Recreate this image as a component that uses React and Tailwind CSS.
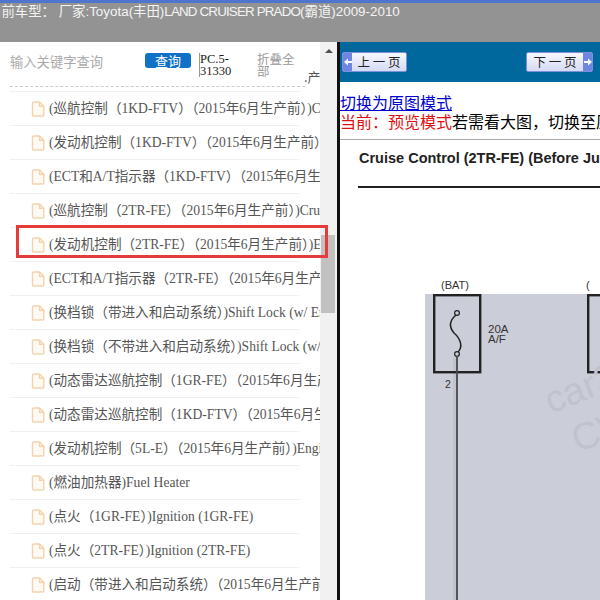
const rows = [
  "(巡航控制（1KD-FTV）（2015年6月生产前）)Cruise Control (1KD-FTV)",
  "(发动机控制（1KD-FTV）（2015年6月生产前）)Engine Control",
  "(ECT和A/T指示器（1KD-FTV）（2015年6月生产前）)ECT",
  "(巡航控制（2TR-FE）（2015年6月生产前）)Cruise Control",
  "(发动机控制（2TR-FE）（2015年6月生产前）)Engine Control",
  "(ECT和A/T指示器（2TR-FE）（2015年6月生产前）)ECT",
  "(换档锁（带进入和启动系统）)Shift Lock (w/ Entry)",
  "(换档锁（不带进入和启动系统）)Shift Lock (w/o Entry)",
  "(动态雷达巡航控制（1GR-FE）（2015年6月生产前）)",
  "(动态雷达巡航控制（1KD-FTV）（2015年6月生产前）)",
  "(发动机控制（5L-E）（2015年6月生产前）)Engine Control",
  "(燃油加热器)Fuel Heater",
  "(点火（1GR-FE）)Ignition (1GR-FE)",
  "(点火（2TR-FE）)Ignition (2TR-FE)",
  "(启动（带进入和启动系统）（2015年6月生产前）)Starting",
];

const serif = "font-['Liberation_Serif','Noto_Sans_CJK_SC',serif]";
const cjk = "font-['Noto_Sans_CJK_SC',sans-serif]";

const FileIcon = () => (
  <svg width="14" height="16" viewBox="0 0 14 16" fill="#fffaf4" stroke="#f4d3ac" strokeWidth="1.4" className="shrink-0">
    <path d="M1.5 2.2 Q1.5 1 2.7 1 H8.5 L12.8 5.3 V13.8 Q12.8 15 11.6 15 H2.7 Q1.5 15 1.5 13.8 Z" />
    <path d="M8.5 1 V5.3 H12.8" fill="none" />
  </svg>
);

const Arrow = ({ next }) => (
  <span className="flex h-full w-[9px] shrink-0 items-center justify-center bg-[#6f86e0]">
    <svg width="8" height="8" viewBox="0 0 8 8" fill="#ffffff">
      {next ? <path d="M0 3 H4 V0.5 L8 4 L4 7.5 V5 H0 Z" /> : <path d="M8 3 H4 V0.5 L0 4 L4 7.5 V5 H8 Z" />}
    </svg>
  </span>
);

const PageButton = ({ label, next, w }) => (
  <div className={`flex h-[20px] items-center overflow-hidden rounded-[2px] border border-[#7d90dc] bg-gradient-to-b from-[#f7f8fe] to-[#d5daf4] ${w}`}>
    {!next && <Arrow />}
    <span className={`flex-1 text-center text-[12.5px] leading-none text-[#222222] ${cjk}`}>{label}</span>
    {next && <Arrow next />}
  </div>
);

const Diagram = () => (
  <svg viewBox="1 0 260 412" width="260" height="412" className="block">
    <rect x="86" y="106" width="175" height="306" fill="#cbced8" />
    <path d="M115.5 170 V412" stroke="#c4c2cb" strokeWidth="3" />
    <text x="102" y="101" fontSize="11" fontFamily="Liberation Sans" fill="#333">(BAT)</text>
    <text x="247" y="101" fontSize="11" fontFamily="Liberation Sans" fill="#333">(</text>
    <rect x="95.2" y="107.2" width="46" height="77" fill="none" stroke="#222" strokeWidth="2.4" />
    <rect x="249.2" y="107.2" width="30" height="77" fill="none" stroke="#222" strokeWidth="2.4" />
    <path d="M117 127 C110 133 110 139 115 145 C122 151 124 159 119 164" fill="none" stroke="#222" strokeWidth="1.5" />
    <circle cx="118" cy="125" r="2.4" fill="none" stroke="#222" strokeWidth="1.2" />
    <circle cx="118" cy="166" r="2.4" fill="none" stroke="#222" strokeWidth="1.2" />
    <path d="M118 168 V412" stroke="#47474f" strokeWidth="1.8" />
    <text x="149" y="145" fontSize="11.5" fontFamily="Liberation Sans" fill="#333">20A</text>
    <text x="149" y="155" fontSize="11.5" fontFamily="Liberation Sans" fill="#333">A/F</text>
    <text x="106" y="200" fontSize="10.5" fontFamily="Liberation Sans" fill="#333">2</text>
    <text x="212" y="226" fontSize="38" fontFamily="Liberation Sans" fill="#c0c3cd" transform="rotate(-22 212 226)">car3</text>
    <text x="239" y="265" fontSize="38" fontFamily="Liberation Sans" fill="#c0c3cd" transform="rotate(-22 239 265)">CV</text>
  </svg>
);

export default function App() {
  return (
    <div className="flex h-[600px] w-[600px] flex-col overflow-hidden bg-white">
      <div className="h-[42px] shrink-0 overflow-hidden border-t-[3px] border-[#4f75cf] bg-[#939393]">
        <p className="-ml-[12px] whitespace-nowrap pt-[1px] font-['Liberation_Sans','Noto_Sans_CJK_SC',sans-serif] text-[13.4px] leading-[16px] text-[#f4f4f4]">
          当前车型：&nbsp;厂家:Toyota(丰田)<span className="tracking-[-0.85px]">LAND CRUISER PRADO</span>(霸道)2009-2010
        </p>
      </div>
      <div className="relative flex min-h-0 flex-1">
        <div className="w-[320px] shrink-0 overflow-hidden">
          <div className="ml-[10px] flex h-[45px] w-[295px] border-b border-dashed border-[#cccccc]">
            <span className={`mt-[11px] w-[135px] shrink-0 text-[13.3px] leading-[18px] text-[#aaaaaa] ${cjk}`}>输入关键字查询</span>
            <span className={`mt-[11px] flex h-[15px] w-[46px] shrink-0 items-center justify-center rounded-[3px] bg-[#0f72c6] text-[13px] leading-none text-white ${cjk}`}>查询</span>
            <span className={`ml-[8px] mt-[11px] h-[24px] w-[38px] shrink-0 border-l border-[#999999] text-[12.5px] leading-[12px] text-[#222222] ${serif}`}>PC.5-31330</span>
            <span className={`ml-[20px] mt-[11px] w-[38px] shrink-0 text-[12.5px] leading-[12px] text-[#999999] ${cjk}`}>折叠全部</span>
            <span className={`ml-[9px] mt-[28px] whitespace-nowrap text-[13px] leading-none text-[#555555] ${cjk}`}>.产</span>
          </div>
          <ul className="mt-[4px]">
            {rows.map((row) => (
              <li key={row} className="mx-[10px] flex h-[34px] w-[289px] items-center gap-[4px] border-t border-[#f0f0f0] pl-[21px]">
                <FileIcon />
                <span className={`whitespace-nowrap pt-[2px] text-[13.6px] text-[#555555] ${serif}`}>{row}</span>
              </li>
            ))}
          </ul>
        </div>
        <div className="relative flex w-[17px] shrink-0 justify-center bg-[#f1f1f1]">
          <span className="mt-[7px] h-0 w-0 border-x-[4px] border-b-[4px] border-x-transparent border-b-[#505050]" />
          <div className="absolute left-[1px] top-[193px] h-[78px] w-[14px] bg-[#c1c1c1]" />
        </div>
        <div className="absolute left-[16px] top-[183px] h-[33px] w-[312px] border-[3px] border-[#e53b3b]" />
        <div className="min-w-0 flex-1 overflow-hidden border-l-[3px] border-[#111111]">
          <div className="flex h-[40px] items-center justify-between bg-[#00689c] pl-[2px] pr-[7px]">
            <PageButton label="上 一 页" w="w-[65px]" />
            <PageButton label="下 一 页" w="w-[67px]" next />
          </div>
          <div className="h-[58px] overflow-hidden whitespace-nowrap border-b border-[#aaaaaa] pt-[12px] font-['Liberation_Serif','Noto_Sans_CJK_SC',serif] text-[16px] leading-[19px]">
            <a href="#" className="block text-[#0000cc] underline">切换为原图模式</a>
            <div><span className="text-[#e01010]">当前：预览模式</span><span className="text-black">若需看大图，切换至原图模式</span></div>
          </div>
          <div className="overflow-hidden whitespace-nowrap pl-[19px] pt-[10px] font-['Liberation_Sans',sans-serif] text-[14.5px] font-bold leading-[16px] text-[#222222]">
            Cruise Control (2TR-FE) (Before June 2015)
          </div>
          <div className="ml-[18px] mt-[20px] h-[2px] bg-[#222222]" />
          <Diagram />
        </div>
      </div>
    </div>
  );
}
